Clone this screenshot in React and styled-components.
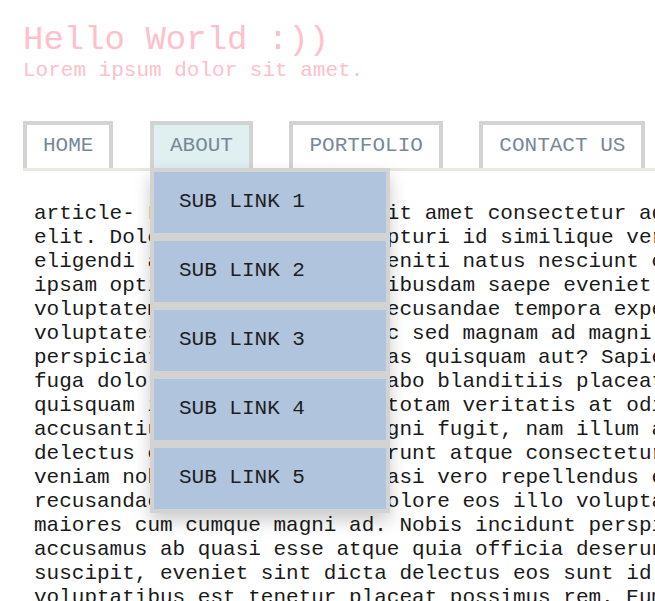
import React from "react";
import styled, { createGlobalStyle } from "styled-components";

const GlobalStyle = createGlobalStyle`
  html, body {
    margin: 0;
    padding: 0;
    background: #ffffff;
    overflow: hidden;
  }
  body {
    font-family: "Liberation Mono", "Courier New", monospace;
  }
`;

const Page = styled.div`
  width: 820px;
  padding: 22px 0 0 23px;
  font-family: "Liberation Mono", "Courier New", monospace;
`;

const Header = styled.header`
  color: #ffc0cb;
`;

const Title = styled.h1`
  margin: 0;
  font-size: 34px;
  line-height: 36px;
  font-weight: normal;
`;

const Subtitle = styled.p`
  margin: 1px 0 0;
  font-size: 21px;
  line-height: 24px;
`;

const Nav = styled.nav`
  margin-top: 38px;
  border-bottom: 3px solid #e8e8de;
`;

const Menu = styled.ul`
  display: flex;
  gap: 36.5px;
  margin: 0;
  padding: 0;
  list-style: none;
`;

const MenuItem = styled.li`
  position: relative;
  border: 4px solid #d3d3d3;
  border-bottom: 0;
  padding: 9px 16px 10px;
  font-size: 21px;
  line-height: 24px;
  color: #778899;
  background: ${(p) => (p.$active ? "#e0efef" : "#ffffff")};
  cursor: pointer;
`;

const Dropdown = styled.ul`
  position: absolute;
  top: 100%;
  left: -4px;
  width: 240px;
  margin: 0;
  padding: 0;
  list-style: none;
  box-shadow: 0 8px 16px rgba(0, 0, 0, 0.2);
  z-index: 2;
`;

const SubLink = styled.li`
  border: 4px solid #d3d3d3;
  background: #b0c4de;
  padding: 18px 24px 19px 25px;
  font-size: 21px;
  line-height: 24px;
  color: #1e1e1e;
`;

const Article = styled.article`
  padding: 31px 11px 0;
  font-size: 21px;
  line-height: 24px;
  color: #1a1a1a;
  white-space: pre;
`;

const lines = [
  "article- Lorem ipsum dolor sit amet consectetur adipisicing",
  "elit. Doloremque nobis, excepturi id similique veritatis sit",
  "eligendi aspernatur quo, deleniti natus nesciunt cumque",
  "ipsam optio ratione, sint quibusdam saepe eveniet dolores",
  "voluptatem laudantium iste recusandae tempora expedita",
  "voluptates quia, eligendi hic sed magnam ad magni dolorum",
  "perspiciatis, dolorem voluptas quisquam aut? Sapiente",
  "fuga doloremque iusto explicabo blanditiis placeat",
  "quisquam iste nesciunt, eum totam veritatis at odio",
  "accusantium dolores, quia magni fugit, nam illum aliquam",
  "delectus cumque, veniam deserunt atque consectetur",
  "veniam nobis, dolore esse quasi vero repellendus eius",
  "recusandae ipsum, quisquam dolore eos illo voluptatibus",
  "maiores cum cumque magni ad. Nobis incidunt perspiciatis",
  "accusamus ab quasi esse atque quia officia deserunt",
  "suscipit, eveniet sint dicta delectus eos sunt id quod",
  "voluptatibus est tenetur placeat possimus rem. Eum quae",
  "nobis dolores magnam quas fugiat.",
];

const subLinks = ["SUB LINK 1", "SUB LINK 2", "SUB LINK 3", "SUB LINK 4", "SUB LINK 5"];

export default function App() {
  return (
    <>
      <GlobalStyle />
      <Page>
        <Header>
          <Title>Hello World :))</Title>
          <Subtitle>Lorem ipsum dolor sit amet.</Subtitle>
        </Header>
        <Nav>
          <Menu>
            <MenuItem>HOME</MenuItem>
            <MenuItem $active>
              ABOUT
              <Dropdown>
                {subLinks.map((s) => (
                  <SubLink key={s}>{s}</SubLink>
                ))}
              </Dropdown>
            </MenuItem>
            <MenuItem>PORTFOLIO</MenuItem>
            <MenuItem>CONTACT US</MenuItem>
          </Menu>
        </Nav>
        <Article>{lines.join("\n")}</Article>
      </Page>
    </>
  );
}
